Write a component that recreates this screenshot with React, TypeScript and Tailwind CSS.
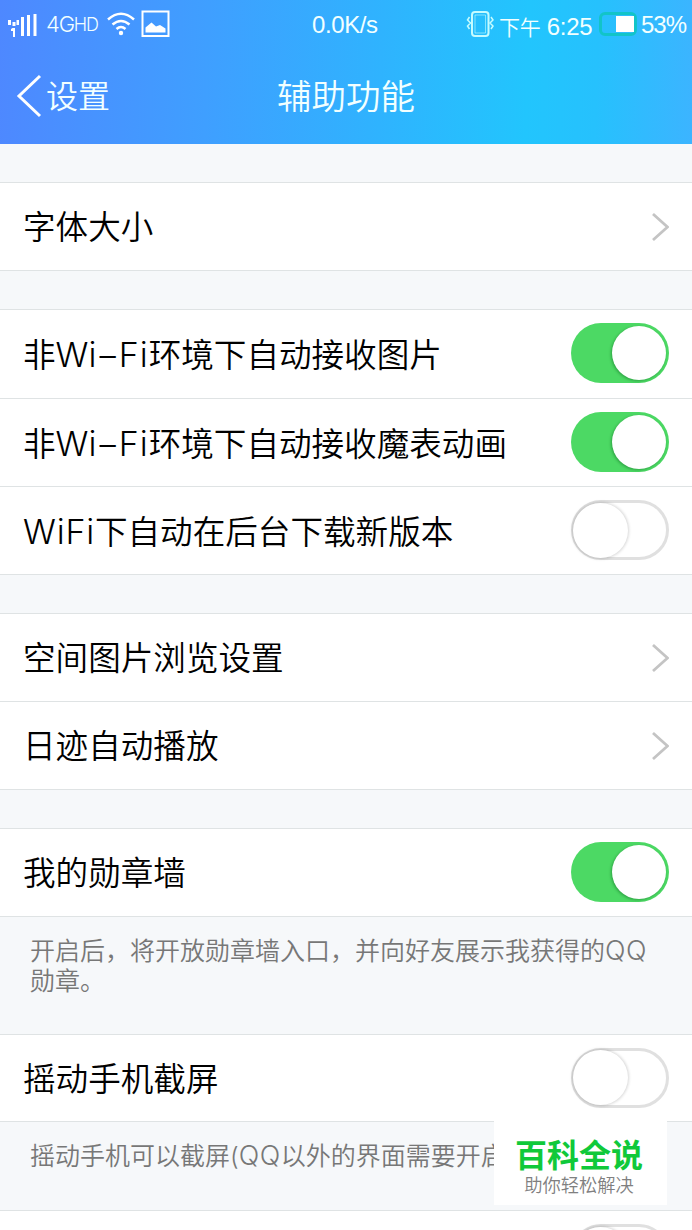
import type { ReactNode } from "react";

function Toggle({ on = false }: { on?: boolean }) {
  return on ? (
    <div className="mb-[2px] flex h-[60px] w-[98px] shrink-0 items-center justify-end rounded-full bg-[#4cd964] pr-[3px]">
      <div className="size-[54px] rounded-full bg-white shadow-[-1px_1px_3px_0px_rgba(0,80,20,0.4)]" />
    </div>
  ) : (
    <div className="mb-px flex h-[60px] w-[98px] shrink-0 items-center rounded-full border-[3px] border-[#e0e0e0] bg-white">
      <div className="-ml-px size-[55px] rounded-full bg-white shadow-[0_0_3px_1px_rgba(0,0,0,0.16)]" />
    </div>
  );
}

function Chevron() {
  return (
    <svg className="h-[30px] w-[18px] shrink-0" viewBox="0 0 18 30" fill="none">
      <path d="M2 2l14.500 13L2 28" stroke="#c4c4c4" strokeWidth="2.8" />
    </svg>
  );
}

function Row({ label, height, children }: { label: ReactNode; height: string; children: ReactNode }) {
  return (
    <div
      className={`flex items-center justify-between border-b border-[#dfe3e4] bg-white pl-[23px] pr-[23px] ${height}`}
    >
      <span className="whitespace-nowrap pt-[2px] text-[32.6px] font-[350] leading-none">{label}</span>
      {children}
    </div>
  );
}

function NonWifi() {
  return (
    <>
      非<span className="text-[34px]">Wi</span>
      <span className="mx-[3px]">–</span>
      <span className="text-[34px] tracking-[1px]">Fi</span>
    </>
  );
}

function Gap() {
  return <div className="h-[39px] border-b border-[#dfe3e4]" />;
}

function StatusBar() {
  return (
    <div className="flex h-[48px] items-center text-[24px] leading-none">
      <svg className="mt-[2px] ml-[7px] h-[24px] w-[31px]" viewBox="0 0 31 24" fill="white">
        <path d="M1 7h3v5H1zM5.500 9h3v4h-3zM9.500 7h2.500v5H9.500zM5.500 15h2.500v9H6v-6H4v-2zM14 4h3v19h-3zM20 2h3v21h-3zM26.500 1h3v22h-3z" />
      </svg>
      <span className="ml-[8px] w-[54px] whitespace-nowrap text-[22px] font-[350] tracking-[-1.2px]">
        4G<span className="relative -top-px text-[18px]">HD</span>
      </span>
      <svg className="ml-[7px] h-[24px] w-[28px]" viewBox="0 0 28 24" fill="none" stroke="white" strokeWidth="2.500">
        <path d="M1 7.500Q14-4 27 7.500M5.500 12.500q8.500-7 17 0M9.500 17q4.500-4 9 0" />
        <circle cx="14" cy="21" r="2.200" fill="white" stroke="none" />
      </svg>
      <svg className="ml-[6px] h-[28px] w-[29px]" viewBox="0 0 29 28" fill="none">
        <path d="M1.500 1.500h26v24.500h-26z" stroke="white" strokeWidth="2" />
        <path d="M4.500 22.500v-5l6-5 4.500 4 4-1.500 5.500 3.500v4z" fill="white" />
      </svg>
      <span className="ml-[142px] w-[68px] whitespace-nowrap font-['Liberation_Sans',sans-serif] text-[24px] tracking-[-0.4px]">
        <span className="relative top-px">0.0K/s</span>
      </span>
      <svg className="ml-[86px] h-[28px] w-[29px]" viewBox="0 0 29 28" fill="none" stroke="#c5fbff" strokeWidth="2">
        <rect x="6" y="2" width="16.500" height="24" rx="3" />
        <path d="M9 5h10.500v18H9z" strokeWidth="1" opacity=".6" />
        <path d="M3.500 7l-2 3 3 3-3 3 2 3M25 7l2 3-3 3 3 3-2 3" strokeWidth="1.500" />
      </svg>
      <span className="relative top-[3px] ml-[4px] w-[94px] whitespace-nowrap font-['Liberation_Sans','Noto_Sans_CJK_SC',sans-serif] text-[24px] tracking-[-0.3px]">
        <span className="text-[21px] font-[350]">下午</span> 6:25
      </span>
      <span className="mb-px ml-[6px] flex h-[24px] w-[38px] items-center justify-end rounded-[6px] border-[3px] border-[#12c4c8]">
        <span className="h-[16px] w-[18px] bg-white" />
      </span>
      <span className="relative top-px ml-[4px] whitespace-nowrap font-['Liberation_Sans',sans-serif] text-[24px] tracking-[-1px]">
        53%
      </span>
    </div>
  );
}

function Header() {
  return (
    <header className="h-[144px] bg-[linear-gradient(92deg,#4e88ff_0%,#3f9fff_30%,#2fb3fe_55%,#22c5fd_76%,#26c1fd_86%,#3cb4ff_100%)] text-[#f2ffff]">
      <StatusBar />
      <div className="grid h-[96px] grid-cols-3 items-center pt-[2px]">
        <div className="flex items-center pl-[16px]">
          <svg className="mb-[2px] h-[44px] w-[26px]" viewBox="0 0 26 44" fill="none">
            <path d="M24 2L3 22l21 20" stroke="white" strokeWidth="3" />
          </svg>
          <span className="ml-[4px] text-[32px] font-[350] leading-none">设置</span>
        </div>
        <h1 className="text-center text-[34.500px] font-[350] leading-none">辅助功能</h1>
      </div>
    </header>
  );
}

function Watermark() {
  return (
    <div className="absolute left-[494px] top-[1121px] flex h-[84px] w-[173px] flex-col items-center bg-white pr-[3px] pt-[18px]">
      <span className="text-[32px] font-bold leading-[34px] text-[#10c93a]">百科全说</span>
      <span className="mt-px text-[18.300px] font-[350] leading-[22px] text-[#808080]">助你轻松解决</span>
    </div>
  );
}

export default function App() {
  return (
    <div className="relative h-[1230px] w-[692px] overflow-hidden bg-[#f6f8fa] font-['Inter','Noto_Sans_CJK_SC',sans-serif] text-black">
      <Header />
      <Gap />
      <Row label="字体大小" height="h-[88px]">
        <Chevron />
      </Row>
      <Gap />
      <Row
        label={
          <>
            <NonWifi />
            环境下自动接收图片
          </>
        }
        height="h-[89px]"
      >
        <Toggle on />
      </Row>
      <Row
        label={
          <>
            <NonWifi />
            环境下自动接收魔表动画
          </>
        }
        height="h-[88px]"
      >
        <Toggle on />
      </Row>
      <Row
        label={
          <>
            <span className="text-[34px] tracking-[0.8px]">WiFi</span>
            下自动在后台下载新版本
          </>
        }
        height="h-[88px]"
      >
        <Toggle />
      </Row>
      <Gap />
      <Row label="空间图片浏览设置" height="h-[88px]">
        <Chevron />
      </Row>
      <Row label="日迹自动播放" height="h-[88px]">
        <Chevron />
      </Row>
      <Gap />
      <Row label="我的勋章墙" height="h-[88px]">
        <Toggle on />
      </Row>
      <p className="h-[118px] whitespace-nowrap border-b border-[#dfe3e4] pl-[30px] pt-[19px] text-[25px] font-[350] leading-[30px] text-[#777]">
        开启后，将开放勋章墙入口，并向好友展示我获得的<span className="text-[27px] tracking-[0.500px]">QQ</span>
        <br />
        勋章。
      </p>
      <Row label="摇动手机截屏" height="h-[87px]">
        <Toggle />
      </Row>
      <p className="h-[89px] whitespace-nowrap border-b border-[#dfe3e4] pl-[30px] pt-[19px] text-[25px] font-[350] leading-[30px] text-[#777]">
        摇动手机可以截屏(<span className="text-[27px] tracking-[0.500px]">QQ</span>以外的界面需要开启
      </p>
      <div className="flex h-[88px] justify-end bg-white pr-[23px] pt-[13px]">
        <Toggle />
      </div>
      <Watermark />
    </div>
  );
}
